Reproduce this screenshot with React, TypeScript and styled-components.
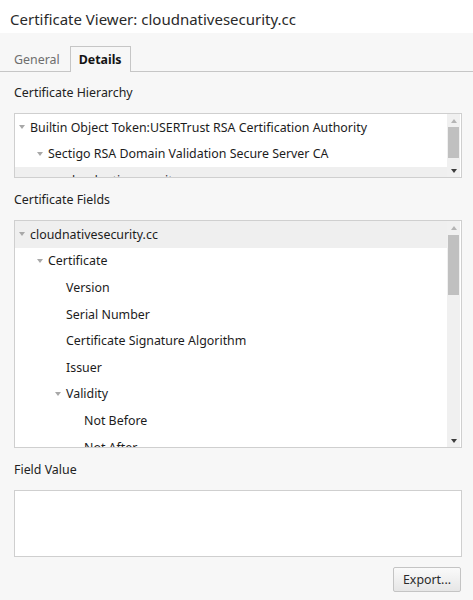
import styled, { createGlobalStyle } from "styled-components";

const GlobalStyle = createGlobalStyle`
  html, body {
    margin: 0;
    padding: 0;
    background: #f7f7f7;
    font-family: "Noto Sans", "Open Sans", sans-serif;
    color: #1f1f1f;
  }
`;

const Window = styled.div`
  width: 473px;
  height: 600px;
  display: flex;
  flex-direction: column;
  background: #f7f7f7;
  overflow: hidden;
`;

const TitleBar = styled.div`
  height: 33px;
  box-sizing: border-box;
  background: #ffffff;
  padding: 5px 0 0 10px;
  display: flex;
  align-items: center;
  font-size: 15px;
  color: #2a2a2a;
`;

const TabStrip = styled.div`
  margin-top: 13px;
  height: 25px;
  display: flex;
  align-items: flex-end;
  border-bottom: 1px solid #c6c6c6;
  padding-left: 8px;
`;

const Tab = styled.div<{ $active?: boolean }>`
  padding: ${(p) => (p.$active ? "0 8px" : "0 10px 0 6px")};
  display: flex;
  align-items: center;
  font-size: 12.4px;
  box-sizing: border-box;
  font-weight: ${(p) => (p.$active ? 700 : 400)};
  color: ${(p) => (p.$active ? "#141414" : "#6e6e6e")};
  background: #f7f7f7;
  border: ${(p) => (p.$active ? "1px solid #c6c6c6" : "none")};
  border-bottom: none;
  margin-bottom: ${(p) => (p.$active ? "-1px" : "0")};
  height: ${(p) => (p.$active ? "26px" : "24px")};
`;

const Body = styled.div`
  flex: 1;
  display: flex;
  flex-direction: column;
  padding: 0 11px 0 14px;
`;

const Label = styled.div<{ $top: number }>`
  margin-top: ${(p) => p.$top}px;
  height: 20px;
  display: flex;
  align-items: center;
  font-size: 12.4px;
  color: #222;
`;

const ListBox = styled.div<{ $height: number }>`
  margin-top: 11px;
  height: ${(p) => p.$height}px;
  border: 1px solid #cfcfcf;
  background: #ffffff;
  box-sizing: border-box;
  display: flex;
  overflow: hidden;
`;

const Rows = styled.div`
  flex: 1;
  overflow: hidden;
`;

const Row = styled.div<{ $level: number; $selected?: boolean }>`
  height: 26.6px;
  display: flex;
  align-items: center;
  padding-left: ${(p) => 15 + p.$level * 18}px;
  background: ${(p) => (p.$selected ? "#efefef" : "transparent")};
  font-size: 12.4px;
  color: #1c1c1c;
  white-space: nowrap;
`;

const Twisty = styled.span<{ $open: boolean }>`
  width: 12px;
  margin-left: -12px;
  display: flex;
  align-items: center;
  visibility: ${(p) => (p.$open ? "visible" : "hidden")};
  &::before {
    content: "";
    border-left: 3.5px solid transparent;
    border-right: 3.5px solid transparent;
    border-top: 4px solid #a8a8a8;
    margin-left: 1px;
  }
`;

const ScrollBar = styled.div`
  width: 13px;
  margin-right: 1px;
  background: #f0f0f0;
  display: flex;
  flex-direction: column;
  align-items: center;
`;

const Arrow = styled.div<{ $up?: boolean; $dim?: boolean }>`
  height: 13px;
  display: flex;
  align-items: center;
  justify-content: center;
  &::before {
    content: "";
    border-left: 3.5px solid transparent;
    border-right: 3.5px solid transparent;
    ${(p) =>
      p.$up
        ? `border-bottom: 4px solid ${p.$dim ? "#b4b4b4" : "#3c3c3c"};`
        : `border-top: 4px solid ${p.$dim ? "#b4b4b4" : "#3c3c3c"};`}
  }
`;

const Track = styled.div`
  flex: 1;
  width: 100%;
  display: flex;
  flex-direction: column;
  align-items: center;
`;

const Thumb = styled.div<{ $height: number; $offset: number }>`
  margin-top: ${(p) => p.$offset}px;
  width: 11px;
  height: ${(p) => p.$height}px;
  background: #c0c0c0;
`;

const ValueBox = styled.div`
  margin-top: 11px;
  height: 67px;
  border: 1px solid #cfcfcf;
  background: #ffffff;
  box-sizing: border-box;
`;

const Footer = styled.div`
  margin-top: 10px;
  display: flex;
  justify-content: flex-end;
  padding-right: 1px;
`;

const Button = styled.button`
  width: 68px;
  height: 25px;
  border: 1px solid #c4c4c4;
  border-radius: 2px;
  background: linear-gradient(#fafafa, #e6e6e6);
  font-family: "Noto Sans", "Open Sans", sans-serif;
  font-size: 12.4px;
  color: #2a2a2a;
  padding: 0;
`;

type Node = { label: string; level: number; open?: boolean; selected?: boolean };

const hierarchy: Node[] = [
  { label: "Builtin Object Token:USERTrust RSA Certification Authority", level: 0, open: true },
  { label: "Sectigo RSA Domain Validation Secure Server CA", level: 1, open: true },
  { label: "cloudnativesecurity.cc", level: 2, selected: true },
];

const fields: Node[] = [
  { label: "cloudnativesecurity.cc", level: 0, open: true, selected: true },
  { label: "Certificate", level: 1, open: true },
  { label: "Version", level: 2 },
  { label: "Serial Number", level: 2 },
  { label: "Certificate Signature Algorithm", level: 2 },
  { label: "Issuer", level: 2 },
  { label: "Validity", level: 2, open: true },
  { label: "Not Before", level: 3 },
  { label: "Not After", level: 3 },
];

const Tree = ({ nodes }: { nodes: Node[] }) => (
  <Rows>
    {nodes.map((n) => (
      <Row key={n.label + n.level} $level={n.level} $selected={n.selected}>
        <Twisty $open={!!n.open} />
        {n.label}
      </Row>
    ))}
  </Rows>
);

const Scroll = ({ offset, thumb }: { offset: number; thumb: number }) => (
  <ScrollBar>
    <Arrow $up $dim />
    <Track>
      <Thumb $offset={offset} $height={thumb} />
    </Track>
    <Arrow />
  </ScrollBar>
);

export default function App() {
  return (
    <Window>
      <GlobalStyle />
      <TitleBar>Certificate Viewer: cloudnativesecurity.cc</TitleBar>
      <TabStrip>
        <Tab>General</Tab>
        <Tab $active>Details</Tab>
      </TabStrip>
      <Body>
        <Label $top={10}>Certificate Hierarchy</Label>
        <ListBox $height={65}>
          <Tree nodes={hierarchy} />
          <Scroll offset={0} thumb={31} />
        </ListBox>
        <Label $top={11}>Certificate Fields</Label>
        <ListBox $height={228}>
          <Tree nodes={fields} />
          <Scroll offset={1} thumb={60} />
        </ListBox>
        <Label $top={11}>Field Value</Label>
        <ValueBox />
        <Footer>
          <Button>Export...</Button>
        </Footer>
      </Body>
    </Window>
  );
}
